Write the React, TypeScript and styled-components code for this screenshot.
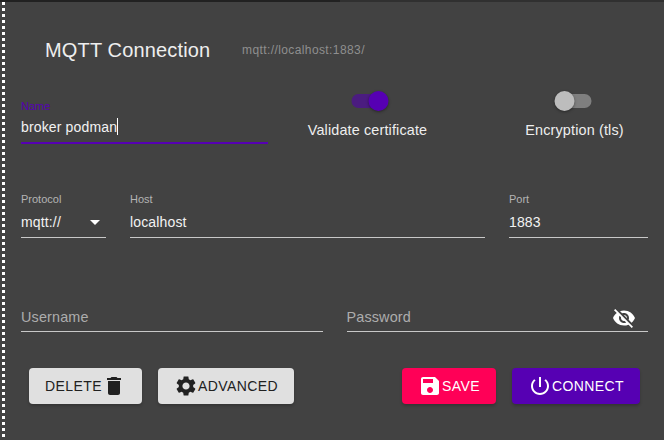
import { createGlobalStyle, styled } from 'styled-components'

const GlobalStyle = createGlobalStyle`
    html, body {
        margin: 0;
        padding: 0;
        background: #424242;
    }
    body {
        font-family: "Liberation Sans", Arial, sans-serif;
        overflow: hidden;
    }
`

const Page = styled.div`
    width: 664px;
    height: 440px;
    display: flex;
    box-sizing: border-box;
    background: #424242;
    color: #fff;
    position: relative;
    overflow: hidden;
`

const TopEdge = styled.div`
    position: absolute;
    top: 0;
    left: 0;
    right: 0;
    height: 2px;
    background: linear-gradient(to right, #212121 340px, #303030 340px);
`

const DottedEdge = styled.div`
    flex: none;
    width: 6px;
    background-image: linear-gradient(to bottom, #fff 3px, transparent 3px);
    background-size: 3px 6px;
    background-position: 2px 2px;
    background-repeat: repeat-y;
`

const Panel = styled.div`
    flex: 1;
    min-width: 0;
    padding: 36px 16px 0 15px;
    display: flex;
    flex-direction: column;
`

const Header = styled.div`
    display: flex;
    align-items: center;
    padding-left: 24px;
    height: 28px;
`

const Title = styled.div`
    font-size: 20px;
    letter-spacing: 0.15px;
    color: #eee;
    width: 197px;
`

const Url = styled.div`
    font-size: 12px;
    letter-spacing: 0.4px;
    color: #8f8f8f;
`

const Row = styled.div<{ $top: number }>`
    display: flex;
    gap: 24px;
    margin-top: ${p => p.$top}px;
    align-items: flex-start;
`

const SwitchRow = styled(Row)`
    gap: 0;
`

const Field = styled.div<{ $width?: number }>`
    ${p => p.$width ? `flex: none; width: ${p.$width}px;` : 'flex: 1;'}
    height: 48px;
    box-sizing: border-box;
    border-bottom: 1px solid #c8c8c8;
    position: relative;
    display: flex;
    flex-direction: column;
    justify-content: flex-end;
`

const NameField = styled(Field)`
    height: 47px;
    margin-top: 6px;
    border-bottom: 2px solid #5600b3;
`

const SmallLabel = styled.label<{ $focused?: boolean }>`
    position: absolute;
    top: 3px;
    left: 0;
    font-size: 11px;
    line-height: 13px;
    color: ${p => p.$focused ? '#5600b3' : '#b4b4b4'};
`

const Value = styled.div`
    font-size: 14px;
    line-height: 20px;
    height: 20px;
    margin-bottom: 5px;
    letter-spacing: 0.15px;
    color: #f2f2f2;
    display: flex;
    align-items: center;
    justify-content: space-between;
`

const Caret = styled.span`
    display: inline-block;
    width: 1px;
    height: 17px;
    background: #fff;
    vertical-align: -3px;
`

const Placeholder = styled(Value)`
    font-size: 14.4px;
    margin-bottom: 4px;
    color: #adadad;
`

const ArrowDown = styled.span`
    width: 0;
    height: 0;
    margin-right: 6px;
    border-left: 5px solid transparent;
    border-right: 5px solid transparent;
    border-top: 5px solid #fff;
`

const EyeButton = styled.span`
    display: flex;
    color: #fff;
    margin: 1px 12px 0 0;
`

const SwitchBlock = styled.div<{ $width: number; $left?: number }>`
    flex: none;
    width: ${p => p.$width}px;
    margin-left: ${p => p.$left ?? 0}px;
    display: flex;
    flex-direction: column;
    align-items: center;
`

const Track = styled.div<{ $on?: boolean }>`
    width: 34px;
    height: 14px;
    margin: 3px 0;
    border-radius: 7px;
    position: relative;
    transform: translateX(${p => p.$on ? 0.5 : -0.5}px);
    background: ${p => p.$on ? '#4b1c80' : '#7f7f7f'};
`

const Thumb = styled.div<{ $on?: boolean }>`
    position: absolute;
    top: -3px;
    ${p => p.$on ? 'right: -3px;' : 'left: -3px;'}
    width: 20px;
    height: 20px;
    border-radius: 50%;
    background: ${p => p.$on ? '#5600b3' : '#bdbdbd'};
    box-shadow: 0 1px 3px rgba(0, 0, 0, 0.4);
`

const SwitchLabel = styled.div`
    margin-top: 9px;
    font-size: 14.4px;
    line-height: 20px;
    letter-spacing: 0.15px;
    color: #eee;
`

const Actions = styled.div`
    display: flex;
    margin-top: 36px;
    padding-left: 8px;
`

const ActionButton = styled.button<{ $kind: 'plain' | 'save' | 'connect'; $width: number; $left: number }>`
    flex: none;
    width: ${p => p.$width}px;
    height: 36px;
    margin-left: ${p => p.$left}px;
    border: 0;
    border-radius: 4px;
    padding: 0;
    display: flex;
    align-items: center;
    justify-content: center;
    font-family: "Liberation Sans", Arial, sans-serif;
    font-size: 14px;
    letter-spacing: 0.4px;
    background: ${p => p.$kind === 'save' ? '#ff0057' : p.$kind === 'connect' ? '#5600b3' : '#e0e0e0'};
    color: ${p => p.$kind === 'plain' ? '#212121' : '#fff'};
    box-shadow: 0 2px 3px rgba(0, 0, 0, 0.2);
`

const Icon = ({ d, size = 24 }: { d: string; size?: number }) => (
    <svg width={size} height={size} viewBox="0 0 24 24" fill="currentColor">
        <path d={d} />
    </svg>
)

const icons = {
    delete: 'M6 19c0 1.1.9 2 2 2h8c1.1 0 2-.9 2-2V7H6v12zM19 4h-3.5l-1-1h-5l-1 1H5v2h14V4z',
    gear: 'M19.14 12.94c.04-.3.06-.61.06-.94 0-.32-.02-.64-.07-.94l2.03-1.58c.18-.14.23-.41.12-.61l-1.92-3.32c-.12-.22-.37-.29-.59-.22l-2.39.96c-.5-.38-1.03-.7-1.62-.94l-.36-2.54c-.04-.24-.24-.41-.48-.41h-3.84c-.24 0-.43.17-.47.41l-.36 2.54c-.59.24-1.13.57-1.62.94l-2.39-.96c-.22-.08-.47 0-.59.22L2.74 8.87c-.12.21-.08.47.12.61l2.03 1.58c-.05.3-.09.63-.09.94s.02.64.07.94l-2.03 1.58c-.18.14-.23.41-.12.61l1.92 3.32c.12.22.37.29.59.22l2.39-.96c.5.38 1.03.7 1.62.94l.36 2.54c.05.24.24.41.48.41h3.84c.24 0 .44-.17.47-.41l.36-2.54c.59-.24 1.13-.56 1.62-.94l2.39.96c.22.08.47 0 .59-.22l1.92-3.32c.12-.22.07-.47-.12-.61l-2.01-1.58zM12 15.6c-1.98 0-3.6-1.62-3.6-3.6s1.62-3.6 3.6-3.6 3.6 1.62 3.6 3.6-1.62 3.6-3.6 3.6z',
    save: 'M17 3H5c-1.11 0-2 .9-2 2v14c0 1.1.89 2 2 2h14c1.1 0 2-.9 2-2V7l-4-4zm-5 16c-1.66 0-3-1.34-3-3s1.34-3 3-3 3 1.34 3 3-1.34 3-3 3zm3-10H5V5h10v4z',
    power: 'M13 3h-2v10h2V3zm4.83 2.17l-1.42 1.42C17.99 7.86 19 9.81 19 12c0 3.87-3.13 7-7 7s-7-3.13-7-7c0-2.19 1.01-4.14 2.58-5.42L6.17 5.17C4.23 6.82 3 9.26 3 12c0 4.97 4.03 9 9 9s9-4.03 9-9c0-2.74-1.23-5.18-3.17-6.83z',
    eyeOff: 'M12 7c2.76 0 5 2.24 5 5 0 .65-.13 1.26-.36 1.83l2.92 2.92c1.51-1.26 2.7-2.89 3.43-4.75-1.73-4.39-6-7.5-11-7.5-1.4 0-2.74.25-3.98.7l2.16 2.16C10.74 7.13 11.35 7 12 7zM2 4.27l2.28 2.28.46.46C3.08 8.3 1.78 10.02 1 12c1.73 4.39 6 7.5 11 7.5 1.55 0 3.03-.3 4.38-.84l.42.42L19.73 22 21 20.73 3.27 3 2 4.27zM7.53 9.8l1.55 1.55c-.05.21-.08.43-.08.65 0 1.66 1.34 3 3 3 .22 0 .44-.03.65-.08l1.55 1.55c-.67.33-1.41.53-2.2.53-2.76 0-5-2.24-5-5 0-.79.2-1.53.53-2.2zm4.31-.78l3.15 3.15.02-.16c0-1.66-1.34-3-3-3l-.17.01z',
}

export default function App() {
    return (
        <Page>
            <GlobalStyle />
            <TopEdge />
            <DottedEdge />
            <Panel>
                <Header>
                    <Title>MQTT Connection</Title>
                    <Url>mqtt://localhost:1883/</Url>
                </Header>
                <SwitchRow $top={27}>
                    <NameField $width={247}>
                        <SmallLabel $focused>Name</SmallLabel>
                        <Value>
                            <span>broker podman<Caret /></span>
                        </Value>
                    </NameField>
                    <SwitchBlock $width={199}>
                        <Track $on><Thumb $on /></Track>
                        <SwitchLabel>Validate certificate</SwitchLabel>
                    </SwitchBlock>
                    <SwitchBlock $width={147} $left={34}>
                        <Track><Thumb /></Track>
                        <SwitchLabel>Encryption (tls)</SwitchLabel>
                    </SwitchBlock>
                </SwitchRow>
                <Row $top={46}>
                    <Field $width={85}>
                        <SmallLabel>Protocol</SmallLabel>
                        <Value>mqtt://<ArrowDown /></Value>
                    </Field>
                    <Field>
                        <SmallLabel>Host</SmallLabel>
                        <Value>localhost</Value>
                    </Field>
                    <Field $width={139}>
                        <SmallLabel>Port</SmallLabel>
                        <Value>1883</Value>
                    </Field>
                </Row>
                <Row $top={46}>
                    <Field>
                        <Placeholder>Username</Placeholder>
                    </Field>
                    <Field>
                        <Placeholder>
                            Password
                            <EyeButton><Icon d={icons.eyeOff} /></EyeButton>
                        </Placeholder>
                    </Field>
                </Row>
                <Actions>
                    <ActionButton $kind="plain" $width={113} $left={0}>
                        DELETE<Icon d={icons.delete} />
                    </ActionButton>
                    <ActionButton $kind="plain" $width={136} $left={16}>
                        <Icon d={icons.gear} />ADVANCED
                    </ActionButton>
                    <ActionButton $kind="save" $width={94} $left={108}>
                        <Icon d={icons.save} />SAVE
                    </ActionButton>
                    <ActionButton $kind="connect" $width={128} $left={16}>
                        <Icon d={icons.power} />CONNECT
                    </ActionButton>
                </Actions>
            </Panel>
        </Page>
    )
}
